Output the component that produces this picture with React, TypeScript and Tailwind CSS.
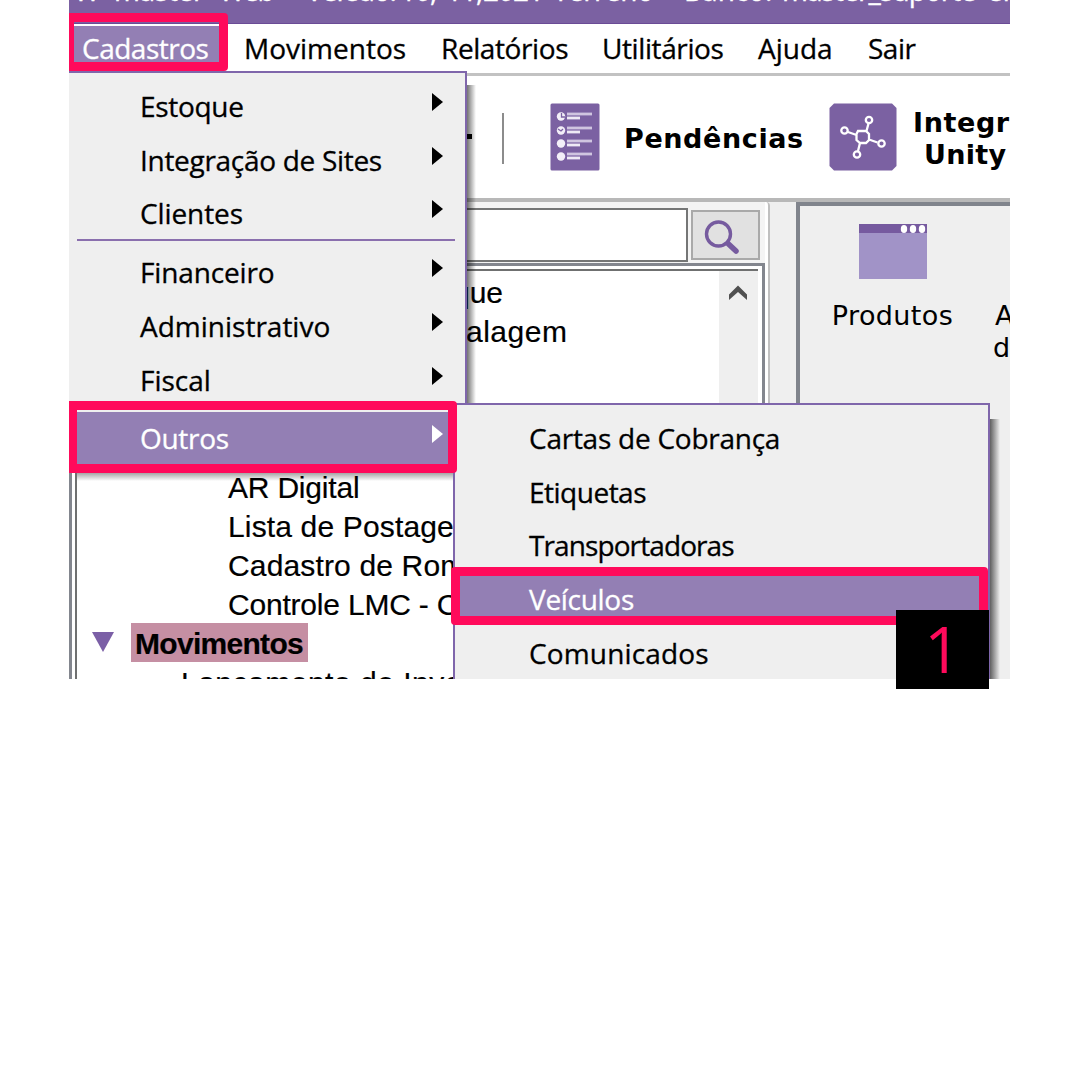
import React from "react";

function TitleBar() {
  return (
    <div className="h-6 shrink-0 overflow-hidden border-b border-[#6a4b96] bg-[#7b61a2] text-white">
      <div className="flex h-6 -translate-y-[22px] pl-[5px] text-[28px] leading-6 whitespace-nowrap [-webkit-text-stroke:0.3px_currentColor]">
        <span className="w-[40px] shrink-0">W-</span>
        <span className="w-[105px] shrink-0 tracking-[-0.3px]">master-</span>
        <span className="w-[87px] shrink-0 tracking-[-1.5px]">Web</span>
        <span className="w-[94px] shrink-0 tracking-[-1px]">Versão:</span>
        <span className="w-[46px] shrink-0 tracking-[-1px]">10,</span>
        <span className="w-[37px] shrink-0 tracking-[-1px]">11,</span>
        <span className="w-[70px] shrink-0 tracking-[-1px]">2021</span>
        <span className="w-[110px] shrink-0 tracking-[-0.5px]">Terreno</span>
        <span className="w-[21px] shrink-0">-</span>
        <span className="w-[98px] shrink-0">Banco:</span>
        <span className="w-[205px] shrink-0 tracking-[-0.9px]">master_suporte</span>
        <span className="shrink-0">em</span>
      </div>
    </div>
  );
}

function MenuBar() {
  return (
    <div className="flex h-[52px] shrink-0 items-center border-b-[3px] border-[#c2c2c2] pb-[2px] pl-1 text-[28px] leading-9 [-webkit-text-stroke:0.3px_currentColor]">
      <span className="mr-[24px] flex h-[44px] w-[147px] shrink-0 items-center bg-[#937fb4] pl-[9px] tracking-[-0.5px] text-white">
        Cadastros
      </span>
      <span className="w-[197px] shrink-0">Movimentos</span>
      <span className="w-[161px] shrink-0 tracking-[-0.4px]">Relatórios</span>
      <span className="w-[156px] shrink-0 tracking-[-0.4px]">Utilitários</span>
      <span className="w-[110px] shrink-0">Ajuda</span>
      <span className="shrink-0 tracking-[-0.5px]">Sair</span>
    </div>
  );
}

function ChecklistIcon() {
  return (
    <svg width="50" height="68" viewBox="0 0 50 68" className="shrink-0">
      <rect x="0.500" y="0.500" width="49" height="67" rx="1.500" fill="#7b61a2" />
      {[13, 27, 40, 53].map((y) => (
        <g key={y}>
          <circle cx="11" cy={y + 0.5} r="4.200" fill="#f3eff8" />
          <path d={`M17 ${y - 2}H42`} stroke="#d0c5e0" strokeWidth="2.800" />
          <path d={`M17 ${y + 2}H30`} stroke="#eee9f5" strokeWidth="2.800" />
        </g>
      ))}
      <path d="M11.500 10V14H15M8 26L11 28L13 26" stroke="#7b61a2" strokeWidth="1.300" fill="none" />
    </svg>
  );
}

function NetworkIcon() {
  return (
    <svg width="68" height="68" viewBox="0 0 68 68" className="shrink-0">
      <path d="M5 .5H63L67.500 5V63L63 67.500H5L.5 63V5Z" fill="#7b61a2" />
      <g fill="none" stroke="#fff" strokeWidth="2.300">
        <path d="M29 28H37L40 31V37L37 40H31L27.500 37V31ZM37.500 28L39.500 20.500M27.500 32L19 29M31 40L29 48M40 36.500L48.500 39.500" />
        <circle cx="40" cy="17" r="3.200" />
        <circle cx="15.500" cy="27.500" r="3.200" />
        <circle cx="28" cy="51.500" r="3.200" />
        <circle cx="52.500" cy="40.500" r="3.200" />
      </g>
    </svg>
  );
}

function Toolbar() {
  return (
    <div className="flex h-[122px] shrink-0 overflow-hidden font-['DejaVu_Sans',Verdana,sans-serif] text-[27px] font-bold">
      <div className="flex w-[481px] shrink-0 pt-[37px] pl-[398px]">
        <span className="mt-[21px] h-[5px] w-[5px] shrink-0 bg-black" />
        <span className="ml-[30px] h-[51px] w-[2px] shrink-0 bg-[#8c8c8c]" />
      </div>
      <div className="flex shrink-0 items-start pt-[27px]">
        <ChecklistIcon />
        <span className="mt-[18px] ml-6 w-[205px] tracking-[0.6px] leading-9">Pendências</span>
        <NetworkIcon />
        <div className="mt-1 ml-[16px] w-[110px] tracking-[0.6px] leading-8">
          <div>Integr</div>
          <div className="pl-[11px] tracking-[0.3px]">Unity</div>
        </div>
      </div>
    </div>
  );
}

function TreeRow({ children, className = "pl-[151px]" }: { children?: React.ReactNode; className?: string }) {
  return <div className={`h-[39px] ${className}`}>{children}</div>;
}

function SidePanel() {
  return (
    <div className="flex w-[701px] shrink-0 flex-col rounded-tr border-r-2 border-[#c0c0c0] bg-white pr-[3px]">
      <div className="flex h-[61px] shrink-0 items-start bg-[#f4f4f4] pt-[5px] pr-[5px]">
        <div className="mt-px h-[54px] grow border-2 border-[#757676] bg-white" />
        <div className="mt-[3px] ml-[3px] flex h-[50px] w-[69px] items-center justify-center border-2 border-[#a9a9a9] bg-[#e1e1e1] pr-2">
          <svg width="36" height="36" viewBox="0 0 36 36" fill="none" stroke="#765b9f" className="mt-1">
            <circle cx="14.500" cy="15" r="12" strokeWidth="3.400" />
            <path d="M24.500 25L32 32" strokeWidth="5.500" strokeLinecap="round" />
          </svg>
        </div>
      </div>
      <div className="flex min-h-0 grow flex-col border-[3px] border-b-0 border-[#83868e] pt-[3px] pr-[4px] pl-[3px]">
        <div className="flex min-h-0 grow border-t-2 border-l-2 border-[#6f7070] bg-white">
          <div className="min-w-0 grow overflow-hidden pt-[2px] font-['Liberation_Sans',Arial,sans-serif] text-[30px] leading-[39px] whitespace-nowrap [-webkit-text-stroke:0.2px_currentColor]">
            <TreeRow className="pl-[376px]">que</TreeRow>
            <TreeRow className="pl-[389px] tracking-[0.5px]">alagem</TreeRow>
            <TreeRow />
            <TreeRow />
            <TreeRow />
            <TreeRow className="pl-[151px] tracking-[-0.2px]">AR Digital</TreeRow>
            <TreeRow className="pl-[151px] tracking-[0.15px]">Lista de Postagem</TreeRow>
            <TreeRow className="pl-[151px] tracking-[0.15px]">Cadastro de Rom</TreeRow>
            <TreeRow className="pl-[151px] tracking-[-0.2px]">Controle LMC - C</TreeRow>
            <div className="flex h-[39px] items-center pl-[15px]">
              <svg width="22" height="20" viewBox="0 0 22 20" className="-mt-1">
                <path d="M0 0H22L11 20Z" fill="#7b5fa6" />
              </svg>
              <span className="-mt-[3px] ml-[17px] h-[39px] w-[177px] bg-[#c58fa3] pt-px pl-1 font-bold tracking-[-0.7px]">Movimentos</span>
            </div>
            <TreeRow className="pl-[104px] tracking-[0.5px]">Lançamento de Inve</TreeRow>
          </div>
          <div className="flex w-[39px] shrink-0 justify-center bg-[#efefef] pt-[13px]">
            <svg width="20" height="18" viewBox="0 0 20 18" className="-ml-[2px]">
              <path d="M1 16V10.500L10 1.500L19 10.500V16L10 8Z" fill="#505050" />
            </svg>
          </div>
        </div>
      </div>
    </div>
  );
}

function ContentPanel() {
  return (
    <div className="ml-[26px] flex grow items-start overflow-hidden border-t-[4px] border-l-[4px] border-[#80848c] bg-[#efefef] pt-[18px] font-['DejaVu_Sans',Verdana,sans-serif] text-[27px] leading-8">
      <div className="flex w-[185px] shrink-0 flex-col items-center">
        <svg width="68" height="55" viewBox="0 0 68 55">
          <rect width="68" height="55" fill="#a193c7" />
          <rect width="68" height="9" fill="#765a9f" />
          {[45, 54, 63].map((x) => (
            <ellipse key={x} cx={x} cy="5" rx="3.200" ry="4" fill="#fff" />
          ))}
        </svg>
        <span className="mt-[21px] tracking-[0.4px]">Produtos</span>
      </div>
      <div className="mt-[76px] ml-[8px] w-6 shrink-0">
        <div className="pl-[2px]">A</div>
        <div>d</div>
      </div>
    </div>
  );
}

function MenuItem({
  label,
  arrow = false,
  selected = false,
  tracking = "tracking-[-0.3px]",
}: {
  label: string;
  arrow?: boolean;
  selected?: boolean;
  tracking?: string;
}) {
  return (
    <div className={`flex h-[53.8px] shrink-0 items-center justify-between ${selected ? "bg-[#937fb4] text-white" : "text-black"}`}>
      <span className={`-mt-[2px] pl-[71px] ${tracking}`}>{label}</span>
      {arrow && (
        <svg width="11" height="18" viewBox="0 0 11 18" className="mr-[22px] -mt-[10px]">
          <path d="M0 0L11 9L0 18Z" fill="currentColor" />
        </svg>
      )}
    </div>
  );
}

function CadastrosMenu() {
  return (
    <div className="absolute top-[71px] left-0 w-[398px]">
      <div className="absolute top-[14px] left-full h-[320px] w-[9px] bg-linear-to-r from-black/55 to-transparent" />
      <div className="absolute top-full left-2 h-[8px] w-[376px] bg-linear-to-b from-black/35 to-transparent" />
      <div className="relative flex h-[402px] flex-col border-t-2 border-r-2 border-[#7f66ab] bg-[#efefef] pt-[7px] text-[28px] leading-9 [-webkit-text-stroke:0.3px_currentColor]">
        <MenuItem label="Estoque" arrow />
        <MenuItem label="Integração de Sites" arrow />
        <MenuItem label="Clientes" arrow tracking="tracking-[-0.1px]" />
        <div className="-mt-[2px] mr-[10px] mb-[5px] ml-2 h-[2px] shrink-0 bg-[#8a6fae]" />
        <MenuItem label="Financeiro" arrow tracking="tracking-[-0.15px]" />
        <MenuItem label="Administrativo" arrow tracking="tracking-normal" />
        <MenuItem label="Fiscal" arrow tracking="tracking-normal" />
        <div className="h-[4px] shrink-0" />
        <MenuItem label="Outros" arrow selected />
      </div>
    </div>
  );
}

function OutrosMenu() {
  return (
    <div className="absolute top-[403px] left-[384px] w-[537px]">
      <div className="absolute top-[16px] left-full h-[260px] w-[10px] bg-linear-to-r from-black/60 to-transparent" />
      <div className="relative flex h-[276px] flex-col overflow-hidden border-x-2 border-t-2 border-[#7f66ab] bg-[#efefef] pt-[7px] pl-[3px] text-[28px] leading-9 [-webkit-text-stroke:0.3px_currentColor]">
        <MenuItem label="Cartas de Cobrança" tracking="tracking-[-0.25px]" />
        <MenuItem label="Etiquetas" tracking="tracking-[-0.5px]" />
        <MenuItem label="Transportadoras" tracking="tracking-[-0.9px]" />
        <MenuItem label="Veículos" selected />
        <MenuItem label="Comunicados" tracking="tracking-[0.15px]" />
      </div>
    </div>
  );
}

export default function App() {
  return (
    <div className="relative h-[1080px] w-[1080px] overflow-hidden bg-white font-['Open_Sans','Noto_Sans',sans-serif] text-black">
      <div className="relative ml-[69px] flex h-[679px] w-[941px] flex-col overflow-hidden">
        <TitleBar />
        <MenuBar />
        <Toolbar />
        <div className="flex min-h-0 grow flex-col border-t-[4px] border-[#b8b8b8] bg-[#efefef]">
          <div className="flex min-h-0 grow">
            <SidePanel />
            <ContentPanel />
          </div>
        </div>
        <CadastrosMenu />
        <OutrosMenu />
        <div className="absolute top-[13px] left-0 h-[58px] w-[159px] rounded-r border-[9px] border-l-[5px] border-[#ff0a5b]" />
        <div className="absolute top-[401px] left-0 h-[72px] w-[388px] rounded-r border-[9px] border-l-[8px] border-[#ff0a5b]" />
        <div className="absolute top-[567px] left-[382px] h-[58px] w-[537px] rounded border-[9px] border-[#ff0a5b]" />
        <div className="absolute top-[625px] left-[386px] h-[3px] w-[530px] bg-[#efefef]" />
      </div>
      <div className="absolute top-[610px] left-[896px] flex h-[79px] w-[93px] items-center justify-center bg-black pb-px text-[64px] leading-none text-[#ff0a5b]">
        1
      </div>
    </div>
  );
}
